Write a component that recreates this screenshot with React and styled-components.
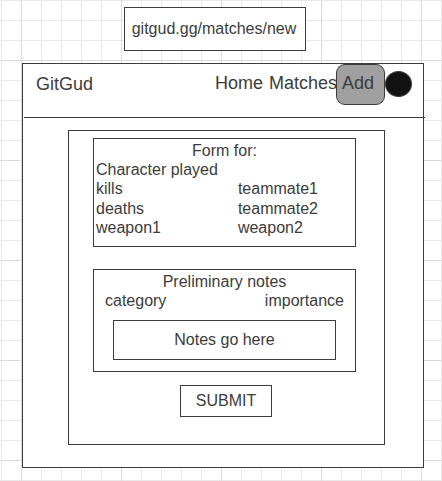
import React from "react";
import styled, { createGlobalStyle } from "styled-components";

const ink = "#3c3c3c";

const GlobalStyle = createGlobalStyle`
  *, *::before, *::after { box-sizing: border-box; }
  body {
    margin: 0;
    min-height: 100vh;
    color: ${ink};
    font: 16px/19px "Liberation Sans", Arial, sans-serif;
    background-color: #fff;
    background-image:
      linear-gradient(to right, #dadada 1px, transparent 1px),
      linear-gradient(to bottom, #dadada 1px, transparent 1px),
      linear-gradient(to right, #e9e9e9 1px, transparent 1px),
      linear-gradient(to bottom, #e9e9e9 1px, transparent 1px);
    background-size: 100px 100px, 100px 100px, 20px 20px, 20px 20px;
    background-position: 21px 0, 0 60px, 1px 0, 0 0;
  }
`;

const Page = styled.div`
  display: flex;
  flex-direction: column;
  gap: 12px;
  padding: 7px 18px 13px 22px;
`;

const AddressBar = styled.input`
  align-self: center;
  width: 182px;
  height: 44px;
  margin-right: 16px;
  padding: 0 2px 0 0;
  border: 1px solid ${ink};
  border-radius: 0;
  background: #fff;
  color: inherit;
  font: inherit;
  text-align: center;
`;

const Window = styled.div`
  border: 1px solid ${ink};
  background: #fff;
  padding-bottom: 22px;
`;

const Header = styled.header`
  display: flex;
  justify-content: space-between;
  align-items: flex-start;
  height: 54px;
  margin: 0 -2px 0 1px;
  padding: 0 13px 0 12px;
  border-bottom: 1px solid ${ink};
  font-size: 18px;
  line-height: 40px;
`;

const NavLink = styled.a`
  color: inherit;
  text-decoration: none;
`;

const Nav = styled.nav`
  display: flex;
  align-items: flex-start;
  line-height: 37px;
`;

const PageLinks = styled.div`
  display: flex;
  gap: 6px;
  padding-top: 1px;
  margin-right: -1px;
`;

const AddLink = styled(NavLink)`
  height: 41px;
  padding: 0 10px 0 5px;
  border: 1px solid ${ink};
  border-radius: 9px;
  background: #a0a0a0;
`;

const Avatar = styled.button`
  width: 27px;
  height: 26px;
  margin-top: 7px;
  padding: 0;
  border: 1px solid ${ink};
  border-radius: 50%;
  background: #121212;
`;

const MatchForm = styled.form`
  display: flex;
  flex-direction: column;
  margin: 12px 38px 0 45px;
  padding: 7px 28px 27px 24px;
  border: 1px solid ${ink};
`;

const Panel = styled.section`
  border: 1px solid ${ink};
  padding: ${(p) => p.$padding};
  margin-bottom: ${(p) => p.$after};
`;

const PanelTitle = styled.h2`
  margin: 0;
  font: inherit;
  text-align: center;
`;

const MatchFields = styled.div`
  display: grid;
  grid-template-columns: 143fr 116fr;
  grid-template-rows: 19px 20px 19px 19px;
`;

const WideField = styled.span`
  grid-column: 1 / -1;
`;

const NoteFields = styled.div`
  display: flex;
  justify-content: space-between;
  padding-bottom: 10px;
`;

const NotesInput = styled.input`
  display: block;
  width: calc(100% - 16px);
  height: 40px;
  margin: 0 8px;
  padding: 0;
  border: 1px solid ${ink};
  border-radius: 0;
  background: #fff;
  color: inherit;
  font: inherit;
  text-align: center;
  &::placeholder { color: inherit; opacity: 1; }
`;

const SubmitButton = styled.button`
  align-self: center;
  width: 92px;
  height: 32px;
  margin-right: -3px;
  padding: 0 0 2px;
  border: 1px solid ${ink};
  background: #fff;
  color: inherit;
  font: inherit;
`;

export default function App() {
  return (
    <>
      <GlobalStyle />
      <Page>
        <AddressBar aria-label="Address" defaultValue="gitgud.gg/matches/new" />
        <Window>
          <Header>
            <NavLink href="#home">GitGud</NavLink>
            <Nav>
              <PageLinks>
                <NavLink href="#home">Home</NavLink>
                <NavLink href="#matches">Matches</NavLink>
              </PageLinks>
              <AddLink href="#add">Add</AddLink>
              <Avatar type="button" aria-label="Profile" />
            </Nav>
          </Header>
          <MatchForm>
            <Panel $padding="2px 2px 9px" $after="22px">
              <PanelTitle>Form for:</PanelTitle>
              <MatchFields>
                <WideField>Character played</WideField>
                <span>kills</span>
                <span>teammate1</span>
                <span>deaths</span>
                <span>teammate2</span>
                <span>weapon1</span>
                <span>weapon2</span>
              </MatchFields>
            </Panel>
            <Panel $padding="2px 11px 11px" $after="13px">
              <PanelTitle>Preliminary notes</PanelTitle>
              <NoteFields>
                <span>category</span>
                <span>importance</span>
              </NoteFields>
              <NotesInput aria-label="Notes" placeholder="Notes go here" />
            </Panel>
            <SubmitButton type="submit">SUBMIT</SubmitButton>
          </MatchForm>
        </Window>
      </Page>
    </>
  );
}
